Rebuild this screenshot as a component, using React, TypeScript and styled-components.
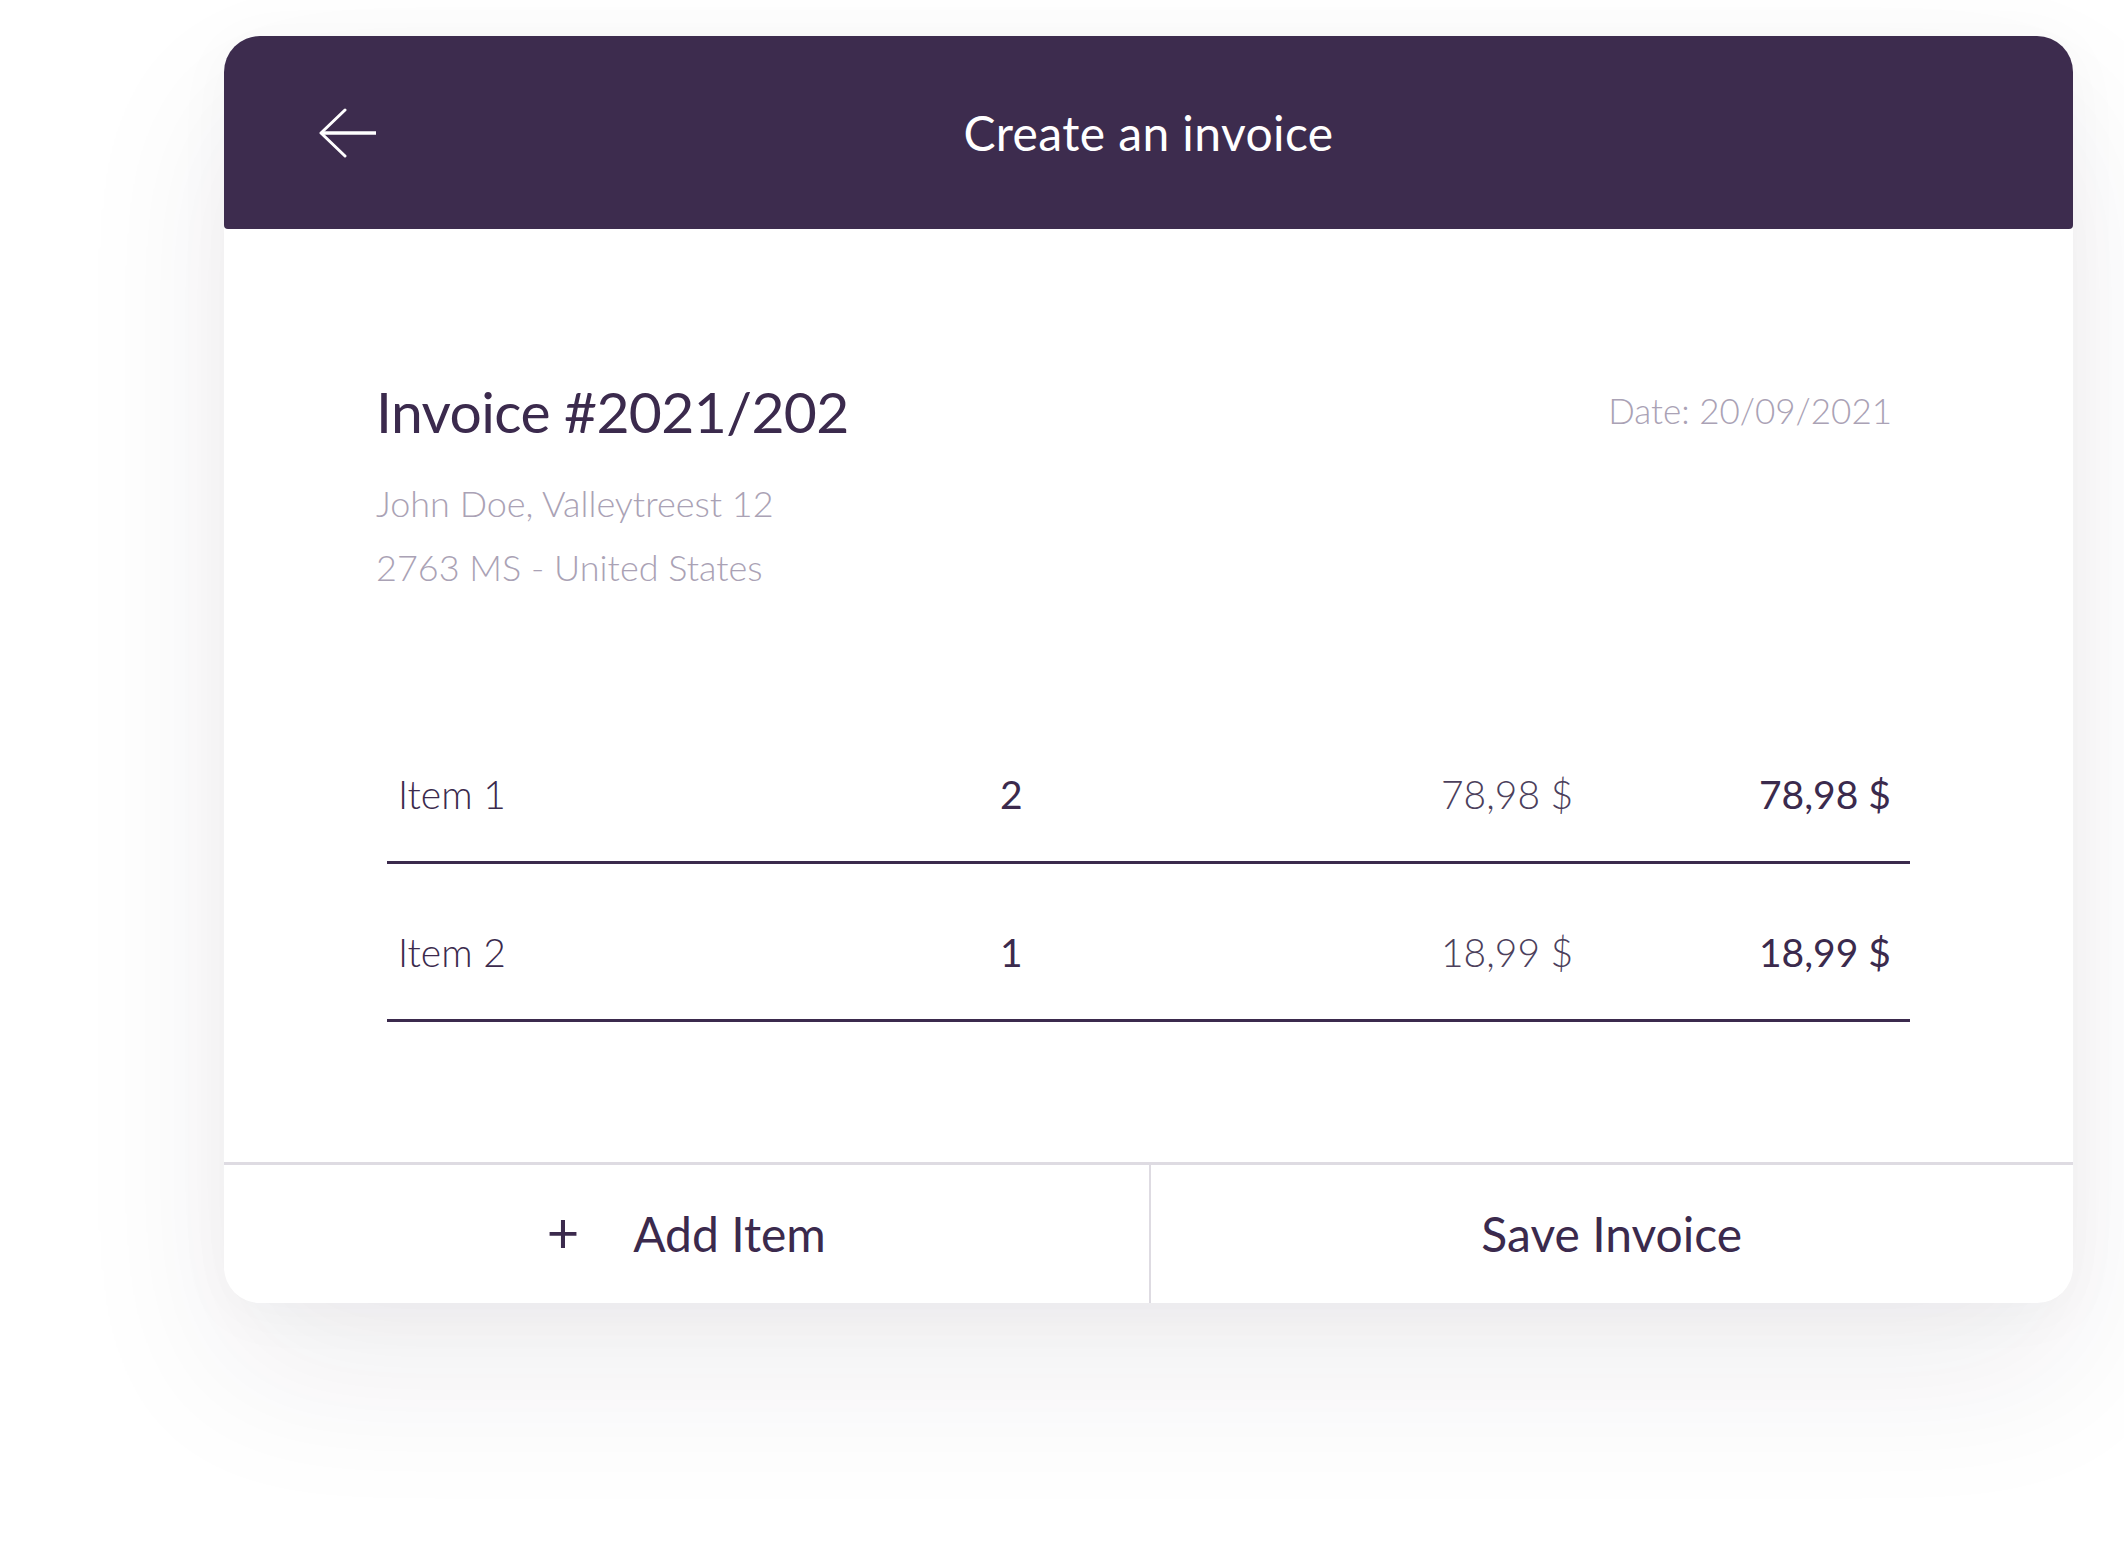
import React from 'react';
import styled, { createGlobalStyle } from 'styled-components';

const colors = {
  plum: '#3d2c4e',
  ink: '#3b2a4d',
  muted: '#aaa2b5',
  soft: '#4c3f5c',
  divider: '#dedbe2',
  white: '#ffffff',
};

const GlobalStyle = createGlobalStyle`
  html, body {
    margin: 0;
    padding: 0;
    background: ${colors.white};
  }
  body {
    font-family: Lato, "Noto Sans", "Liberation Sans", sans-serif;
    color: ${colors.ink};
  }
`;

const Page = styled.div`
  width: 2124px;
  height: 1545px;
  padding: 36px 0 0 224px;
  box-sizing: border-box;
  overflow: hidden;
`;

const Card = styled.div`
  width: 1849px;
  height: 1267px;
  background: ${colors.white};
  border-radius: 36px;
  box-shadow: 0 70px 160px rgba(40, 30, 50, 0.075), 0 10px 60px rgba(40, 30, 50, 0.035);
  display: flex;
  flex-direction: column;
`;

const TopBar = styled.header`
  height: 193px;
  background: ${colors.plum};
  border-radius: 36px 36px 4px 4px;
  display: grid;
  grid-template-columns: 1fr auto 1fr;
  align-items: center;
  padding: 0 94px;
`;

const BackButton = styled.button`
  background: none;
  border: none;
  padding: 0;
  width: 58px;
  height: 50px;
  cursor: pointer;
  display: flex;
`;

const Title = styled.h1`
  margin: 0;
  font-size: 48px;
  line-height: 1;
  font-weight: 400;
  color: ${colors.white};
  letter-spacing: 0.4px;
`;

const Body = styled.main`
  flex: 1;
  padding: 154px 163px 0 163px;
  display: flex;
  flex-direction: column;
`;

const InvoiceHead = styled.div`
  display: flex;
  justify-content: space-between;
  align-items: flex-start;
  padding: 0 18px 0 0;
  margin-left: -11px;
`;

const InvoiceTitle = styled.h2`
  margin: 0;
  font-size: 57px;
  line-height: 1;
  font-weight: 400;
  letter-spacing: -0.6px;
  color: ${colors.ink};
`;

const DateText = styled.div`
  margin-top: 10px;
  font-size: 35px;
  line-height: 1;
  font-weight: 300;
  color: ${colors.muted};
`;

const Address = styled.div`
  margin: 31px 0 0 -11px;
  font-size: 36px;
  line-height: 64px;
  font-weight: 300;
  color: ${colors.muted};
`;

const Table = styled.div`
  margin-top: 107px;
  display: flex;
  flex-direction: column;
`;

const Row = styled.div`
  display: grid;
  grid-template-columns: 602px 441px 318px 1fr;
  align-items: center;
  padding: 69px 0 47px 11px;
  border-bottom: 3px solid ${colors.ink};
`;

const Cell = styled.div<{ $weight?: number; $tone?: string }>`
  font-size: 39px;
  line-height: 1;
  font-weight: ${p => p.$weight ?? 300};
  color: ${p => p.$tone ?? colors.ink};
`;

const Footer = styled.footer`
  height: 138px;
  border-top: 3px solid ${colors.divider};
  display: grid;
  grid-template-columns: 1fr 1fr;
`;

const FooterButton = styled.button<{ $split?: boolean }>`
  background: none;
  border: none;
  border-left: ${p => (p.$split ? `2px solid ${colors.divider}` : 'none')};
  font-family: inherit;
  font-size: 48px;
  line-height: 1;
  font-weight: 400;
  color: ${colors.ink};
  display: flex;
  align-items: center;
  justify-content: center;
  gap: 54px;
  cursor: pointer;
  padding: 0;
`;

const Plus = styled.span`
  font-size: 56px;
  font-weight: 400;
  margin-top: -4px;
`;

const items = [
  { name: 'Item 1', qty: '2', unit: '78,98 $', total: '78,98 $' },
  { name: 'Item 2', qty: '1', unit: '18,99 $', total: '18,99 $' },
];

const ArrowLeft = () => (
  <svg width="58" height="50" viewBox="0 0 58 50" fill="none">
    <path d="M27 2 L3 25 L27 48" stroke="#fff" strokeWidth="3" strokeLinecap="round" strokeLinejoin="round" />
    <path d="M4 25 H58" stroke="#fff" strokeWidth="3.5" />
  </svg>
);

const App: React.FC = () => {
  return (
    <>
      <GlobalStyle />
      <Page>
        <Card>
          <TopBar>
            <BackButton aria-label="Back">
              <ArrowLeft />
            </BackButton>
            <Title>Create an invoice</Title>
            <span />
          </TopBar>
          <Body>
            <InvoiceHead>
              <InvoiceTitle>Invoice #2021/202</InvoiceTitle>
              <DateText>Date: 20/09/2021</DateText>
            </InvoiceHead>
            <Address>
              <div>John Doe, Valleytreest 12</div>
              <div>2763 MS - United States</div>
            </Address>
            <Table>
              {items.map(item => (
                <Row key={item.name}>
                  <Cell>{item.name}</Cell>
                  <Cell $weight={400}>{item.qty}</Cell>
                  <Cell $tone={colors.soft}>{item.unit}</Cell>
                  <Cell $weight={400}>{item.total}</Cell>
                </Row>
              ))}
            </Table>
          </Body>
          <Footer>
            <FooterButton>
              <Plus>+</Plus>
              <span>Add Item</span>
            </FooterButton>
            <FooterButton $split>Save Invoice</FooterButton>
          </Footer>
        </Card>
      </Page>
    </>
  );
};

export default App;
